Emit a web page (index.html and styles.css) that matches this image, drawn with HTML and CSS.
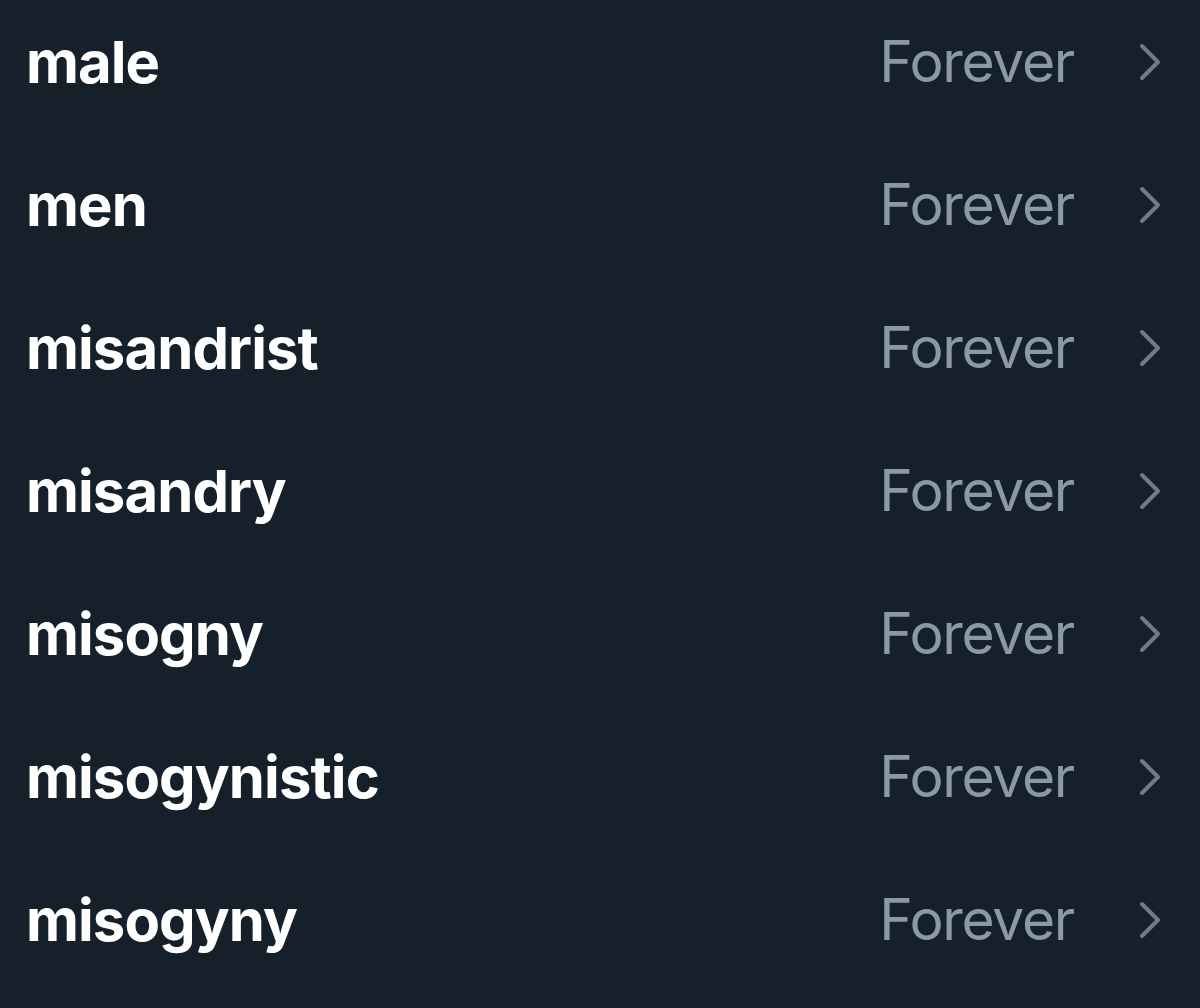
FILE: index.html
```html
<!DOCTYPE html>
<html lang="en">
<head>
<meta charset="utf-8">
<title>Muted words</title>
<link rel="stylesheet" href="styles.css">
</head>
<body>
<ul class="list">
  <li class="row"><span class="word">male</span><span class="dur">Forever</span><svg class="chev" viewBox="0 0 24 40"><path d="M4 4 L20 20 L4 36"/></svg></li>
  <li class="row"><span class="word">men</span><span class="dur">Forever</span><svg class="chev" viewBox="0 0 24 40"><path d="M4 4 L20 20 L4 36"/></svg></li>
  <li class="row"><span class="word">misandrist</span><span class="dur">Forever</span><svg class="chev" viewBox="0 0 24 40"><path d="M4 4 L20 20 L4 36"/></svg></li>
  <li class="row"><span class="word">misandry</span><span class="dur">Forever</span><svg class="chev" viewBox="0 0 24 40"><path d="M4 4 L20 20 L4 36"/></svg></li>
  <li class="row"><span class="word">misogny</span><span class="dur">Forever</span><svg class="chev" viewBox="0 0 24 40"><path d="M4 4 L20 20 L4 36"/></svg></li>
  <li class="row"><span class="word">misogynistic</span><span class="dur">Forever</span><svg class="chev" viewBox="0 0 24 40"><path d="M4 4 L20 20 L4 36"/></svg></li>
  <li class="row"><span class="word">misogyny</span><span class="dur">Forever</span><svg class="chev" viewBox="0 0 24 40"><path d="M4 4 L20 20 L4 36"/></svg></li>
</ul>
</body>
</html>
```

FILE: styles.css
```css
html, body {
  margin: 0;
  padding: 0;
  background: #16202b;
  height: 100%;
  overflow: hidden;
}
body {
  font-family: Inter, "Liberation Sans", sans-serif;
}
.list {
  list-style: none;
  margin: -10px 0 0 0;
  padding: 0;
}
.row {
  height: 143px;
  display: flex;
  align-items: center;
  padding: 0 38px 0 26px;
}
.word {
  flex: 1;
  color: #ffffff;
  font-weight: 700;
  font-size: 58px;
  letter-spacing: -0.9px;
}
.dur {
  color: #8b98a5;
  font-size: 57px;
  font-weight: 400;
  letter-spacing: -1.3px;
}
.chev {
  width: 24px;
  height: 40px;
  margin-left: 64px;
  fill: none;
  stroke: #6e7b88;
  stroke-width: 4;
  stroke-linecap: round;
  stroke-linejoin: round;
}
```
